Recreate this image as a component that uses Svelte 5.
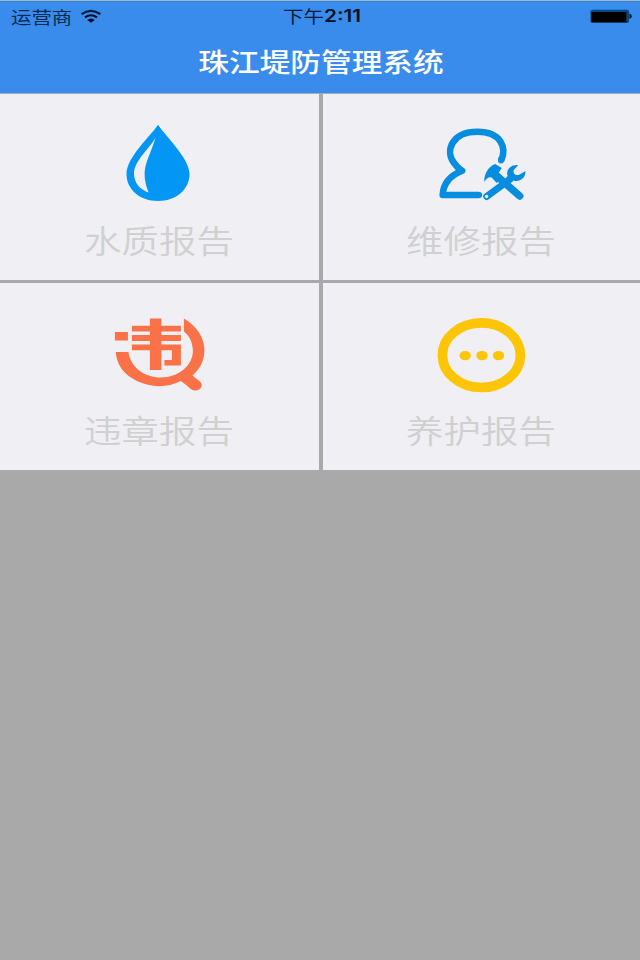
<script>
  const tiles = [
    { icon: 'drop', label: '水质报告' },
    { icon: 'repair', label: '维修报告' },
    { icon: 'violation', label: '违章报告' },
    { icon: 'care', label: '养护报告' }
  ];
</script>

<div class="screen">
  <header>
    <div class="status">
      <div class="carrier">
        <span class="wide">运营商</span>
        <svg class="wifi" width="22" height="15" viewBox="0 0 22 15">
          <path d="M1.6 5.2Q11 -1.6 20.4 5.2" fill="none" stroke="#001a38" stroke-width="2.2" />
          <path d="M5 8.4Q11 4.2 17 8.4" fill="none" stroke="#001020" stroke-width="2.1" />
          <path d="M7.3 11Q11 8 14.7 11L11 13.8Z" fill="#000a18" />
        </svg>
      </div>
      <div class="time"><span class="wide">下午</span><b>2:11</b></div>
      <svg class="battery" width="44" height="15" viewBox="0 0 44 15">
        <rect x="1.5" y="0.8" width="38.5" height="13.2" rx="1.8" fill="#064a82" />
        <rect x="2.4" y="3" width="35" height="10.2" fill="#000" />
        <path d="M40.4 4.4Q43 5.5 43 7.2T40.4 10Z" fill="#001526" />
      </svg>
    </div>
    <h1><span>珠江堤防管理系统</span></h1>
  </header>
  <main>
    {#each tiles as tile}
      <button class="tile">
        <svg class="icon" width="110" height="90" viewBox="0 0 110 90">
          {#if tile.icon === 'drop'}
            <path d="M54 4.7C60.5 15 85.5 38 85.5 54C85.5 70 71.5 81 54 81C36.5 81 22.5 70 22.5 54C22.5 37 47.5 15 54 4.7Z" fill="#0496f5" />
            <path d="M51.6 17.5C46 28 30 41 30 53.5C30 63 36 69.5 44.6 72.4C42.3 67 40.4 60 40.6 53C41 42 47 33 51.6 17.5Z" fill="#efeff4" />
          {:else if tile.icon === 'repair'}
            <g transform="translate(3.7 0)">
              <g fill="none" stroke="#078de0" stroke-linejoin="round">
                <path d="M70.5 40.5C76 28 71 11.7 46.5 11.7C21 11.7 14.5 31 23 42.5C26 46.5 30 50 31.5 50.8C21 55 12.5 62.5 12 75H48.5" stroke-width="6.6" />
                <path d="M70.3 40.5V39.5M48.5 75H47.5" stroke-width="6" stroke-linecap="round" />
                <path d="M64 54L89 76" stroke-width="7.4" stroke-linecap="round" />
                <path d="M79 59.5L56 76.5" stroke-width="7" stroke-linecap="round" />
              </g>
              <path d="M53.7 62C53 54.5 57 47 64.5 43.9L71 48L68 53L73 58L66 63L61 57.5C58 56.5 55.7 58.5 53.7 62Z" fill="#078de0" />
              <path d="M73.5 61L77 56Q75.2 51.5 78.5 48Q82 44.3 87.5 45.2L83.7 49.2Q81.7 51.5 83.8 53.9Q86 56 89 54.4L94.8 51Q94.8 56.5 91 59.3Q87.5 61.8 82.5 60.4L77 64Z" fill="#078de0" />
              <circle cx="55.9" cy="76.5" r="1.7" fill="#efeff4" />
            </g>
          {:else if tile.icon === 'violation'}
            <g fill="#fb7148" transform="translate(0.9 0)">
              <path d="M10 22H23V30.4H10ZM45 8.4H56.5V60H45Z" />
              <path d="M27 15.8H76V21.6H27ZM27 25H76V31H27ZM27 34.4H76V55.4H59.5V50H67V40.2H27Z" />
              <path d="M79 8.5C92 16 99.5 28 99.5 40C99.5 51 95 59 87.5 65.5L95 71.5C99 75 96 80 91 80.5C87 80.5 85 78.5 82.5 76L76 71C66 76 56 77 47 75.5C26 72 11.5 59 11 42H23.5C26 58 40 67.5 56 67.5C74 67.5 88 55 88 41C88 33 84.5 25.5 79 21.5Z" />
            </g>
          {:else}
            <ellipse cx="54.4" cy="45.2" rx="39" ry="32.3" fill="none" stroke="#fdc505" stroke-width="9.7" />
            <ellipse cx="38.2" cy="45.6" rx="5.7" ry="4.7" fill="#fdc505" />
            <ellipse cx="55" cy="45.6" rx="5.7" ry="4.7" fill="#fdc505" />
            <ellipse cx="71.5" cy="45.6" rx="5.7" ry="4.7" fill="#fdc505" />
          {/if}
        </svg>
        <span class="label">{tile.label}</span>
      </button>
    {/each}
  </main>
</div>

<style>
  :global(body) { margin: 0; }
  .screen {
    width: 640px;
    height: 960px;
    overflow: hidden;
    box-sizing: border-box;
    background: #a9a9a9;
    border-top: 1px solid #b0b2b5;
    font-family: "Noto Sans CJK SC", sans-serif;
  }
  header {
    height: 93px;
    box-sizing: border-box;
    background: #398bec;
    border-top: 1px solid #218bea;
    border-bottom: 1px solid #a5acb5;
  }
  .status {
    height: 29px;
    display: grid;
    grid-template-columns: 1fr auto 1fr;
    align-items: center;
    padding: 0 7px 0 11px;
    line-height: 27px;
    font-size: 17px;
    color: #052c50;
  }
  .carrier { display: flex; align-items: center; }
  .wide { display: inline-block; transform: scaleX(1.2); transform-origin: left; }
  .carrier .wide { width: 69px; flex: none; }
  .wifi { display: block; }
  .time { display: flex; color: #001c38; margin-left: 2px; }
  .time .wide { width: 41px; }
  .time b {
    width: 39px;
    font: 600 17px/29px Inter, sans-serif;
    color: #001020;
    transform: scaleX(1.22);
    transform-origin: left;
  }
  .battery { justify-self: end; }
  h1 {
    margin: 0;
    height: 62px;
    line-height: 60px;
    text-align: center;
    font-size: 26px;
    font-weight: 500;
    color: #fff;
    padding-left: 2px;
  }
  h1 span { display: inline-block; transform: scaleX(1.18); }
  main {
    display: grid;
    grid-template-columns: 318.5px 317px;
    grid-template-rows: 186px 187px;
    column-gap: 4.5px;
    row-gap: 3px;
  }
  .tile {
    border: 0;
    margin: 0;
    padding: 26px 0 0;
    background: #efeff4;
    display: flex;
    flex-direction: column;
    align-items: center;
    justify-content: flex-start;
    font-family: inherit;
    overflow: hidden;
  }
  .tile:nth-child(n + 3) { padding-top: 27px; }
  .icon { display: block; flex: none; }
  .label {
    font-size: 32px;
    line-height: 48px;
    margin-top: 5px;
    font-weight: 350;
    color: #d0d0d1;
    transform: scaleX(1.17);
  }
</style>
